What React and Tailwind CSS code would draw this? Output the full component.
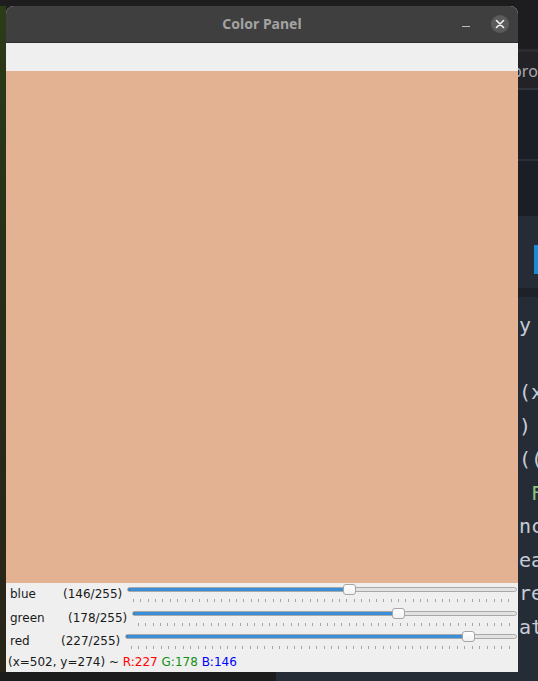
import React from "react";

const TICKS = Array.from({ length: 52 });

function Slider({ value }) {
  const frac = value / 255;
  return (
    <div className="relative flex-1 mr-[1px] h-full">
      <div className="mt-[4px] h-[5px] rounded-full border border-[#a9a9a9] bg-[#e2e2e2] relative overflow-hidden">
        <div
          className="absolute left-0 top-[-1px] bottom-[-1px] rounded-l-full border border-[#1d5f9c] bg-[#3b8fd9]"
          style={{ width: `calc(${frac} * (100% - 13px) + 6px)` }}
        />
      </div>
      <div className="mt-[7px] flex justify-between pl-[6px] pr-[7px]">
        {TICKS.map((_, i) => (
          <div key={i} className="w-px h-[3px] bg-[#a4a4a4]" />
        ))}
      </div>
      <div
        className="absolute top-[1px] w-[13px] h-[11px] rounded-[3px] border border-[#a6a6a6] bg-gradient-to-b from-[#ffffff] to-[#f2f2f2]"
        style={{ left: `calc(${frac} * (100% - 13px))` }}
      />
    </div>
  );
}

function Row({ label, value, labelW, h }) {
  return (
    <div className={`flex ${h}`}>
      <span className={`${labelW} pl-[4px] pt-[4px] leading-[15px]`}>{label}</span>
      <span className="w-[64px] pt-[4px] leading-[15px] whitespace-nowrap">({value}/255)</span>
      <Slider value={value} />
    </div>
  );
}

export default function App() {
  const codeLines = ["y", "\u00a0", "(x", ")", "((", "\u00a0F", "nc", "ea", "re", "at", "\u00a0"];
  return (
    <div className="w-[538px] h-[681px] bg-[#1d1d1d] overflow-hidden flex">
      {/* left desktop strip */}
      <div className="w-[6px] flex flex-col">
        <div className="h-[6px] bg-[#1d1d1d]" />
        <div className="flex-1 bg-gradient-to-b from-[#2c3b18] via-[#252c17] to-[#2a2419]" />
        <div className="h-[9px] bg-[#1c1c1c]" />
      </div>

      {/* window column */}
      <div className="w-[512px] flex flex-col">
        <div className="h-[6px] bg-[#1d1d1d]" />
        <div className="h-[666px] flex flex-col bg-[#efefef] rounded-t-[8px] overflow-hidden">
          {/* title bar */}
          <div className="h-[37px] bg-[#3f3f3f] border-b border-[#2e2e2e] relative flex items-center justify-center">
            <span className="text-[14px] font-bold text-[#a3a3a3] [font-family:'Noto_Sans',sans-serif] leading-none pb-[1px]">
              Color Panel
            </span>
            <div className="absolute left-[456px] top-[20px] w-[8px] h-px bg-[#bdbdbd]" />
            <div className="absolute left-[485px] top-[9px] w-[18px] h-[18px] rounded-full bg-[#5b5b5b] flex items-center justify-center">
              <svg width="10" height="10" viewBox="0 0 10 10">
                <path d="M1.5 1.5 L8.5 8.5 M8.5 1.5 L1.5 8.5" stroke="#f2f2f2" strokeWidth="1.6" strokeLinecap="round" />
              </svg>
            </div>
          </div>
          {/* toolbar */}
          <div className="h-[28px] bg-[#efefef]" />
          {/* color image */}
          <div className="h-[512px] bg-[rgb(227,178,146)]" />
          {/* trackbars */}
          <div className="h-[70px] flex flex-col text-[12px] text-[#1a1a1a] [font-family:'DejaVu_Sans',sans-serif]">
            <Row label="blue" value={146} labelW="w-[57px]" h="h-[24px]" />
            <Row label="green" value={178} labelW="w-[62px]" h="h-[23px]" />
            <Row label="red" value={227} labelW="w-[55px]" h="h-[23px]" />
          </div>
          {/* status */}
          <div className="h-[19px] pl-[2px] pt-[2px] text-[12px] leading-[15px] text-[#1a1a1a] [font-family:'DejaVu_Sans',sans-serif] whitespace-nowrap">
            (x=502, y=274) ~ <span className="text-[#ff0000]">R:227</span>{" "}
            <span className="text-[#129212]">G:178</span>{" "}
            <span className="text-[#0000ff]">B:146</span>
          </div>
        </div>
        <div className="h-[9px] flex">
          <div className="w-[270px] bg-[#1c1c1c]" />
          <div className="flex-1 bg-[#262c36]" />
        </div>
      </div>

      {/* right desktop strip: editor behind */}
      <div className="w-[20px] flex flex-col overflow-hidden">
        <div className="h-[49px] bg-[#1d1d1f]" />
        <div className="h-[3px] bg-[#2c2c30]" />
        <div className="h-[36px] bg-[#232327] text-[#a9a9ad] text-[16px] leading-[30px] pt-[4px] [font-family:'Noto_Sans',sans-serif] whitespace-nowrap -ml-[6px]">
          pro
        </div>
        <div className="h-[2px] bg-[#30333a]" />
        <div className="h-[69px] bg-[#1b1f25]" />
        <div className="h-[2px] bg-[#2a2f37]" />
        <div className="h-[55px] bg-[#1b1f25]" />
        <div className="h-[72px] bg-[#262c35] flex justify-end pt-[29px]">
          <div className="w-[4px] h-[29px] bg-[#1a8ad4]" />
        </div>
        <div className="h-[9px] bg-[#1e2228]" />
        <div className="flex-1 bg-[#262c36] pt-[12px] pl-[1px] text-[20px] leading-[33.5px] text-[#c6ccd6] [font-family:'DejaVu_Sans_Mono',monospace] whitespace-pre">
          {codeLines.map((l, i) => (
            <div key={i} className={l === "\u00a0F" ? "text-[#8fc27a]" : ""}>
              {l}
            </div>
          ))}
        </div>
      </div>
    </div>
  );
}
